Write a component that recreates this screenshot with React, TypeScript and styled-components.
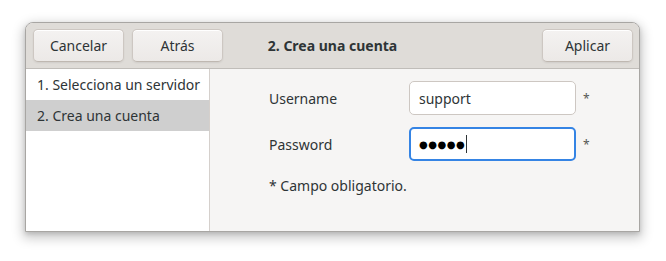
import React from "react";
import styled, { createGlobalStyle } from "styled-components";

const GlobalStyle = createGlobalStyle`
  html, body {
    margin: 0;
    padding: 0;
    background: #ffffff;
  }
  body {
    font-family: "Noto Sans", "DejaVu Sans", sans-serif;
    font-size: 14px;
    color: #2e3436;
  }
`;

const Stage = styled.div`
  padding: 22px 26px 29px 25px;
`;

const Window = styled.div`
  width: 615px;
  height: 210px;
  box-sizing: border-box;
  border: 1px solid #a8a6a3;
  border-radius: 8px 8px 0 0;
  background: #f6f5f4;
  box-shadow: 0 4px 12px 2px rgba(0, 0, 0, 0.22), 0 2px 4px rgba(0, 0, 0, 0.12);
  display: flex;
  flex-direction: column;
  overflow: hidden;
`;

const HeaderBar = styled.div`
  position: relative;
  height: 46px;
  flex: none;
  box-sizing: border-box;
  padding: 0 6px 0 7px;
  background: #dfdcd8;
  border-bottom: 1px solid #c0bdb9;
  display: flex;
  align-items: center;
  gap: 8px;
`;

const Spacer = styled.div`
  flex: 1;
`;

const Title = styled.div`
  position: absolute;
  left: 0;
  right: 0;
  top: 0;
  bottom: 0;
  display: flex;
  align-items: center;
  justify-content: center;
  font-weight: 700;
  pointer-events: none;
`;

const HeaderButton = styled.button`
  width: 91px;
  height: 33px;
  box-sizing: border-box;
  border: 1px solid #cdc7c2;
  border-bottom-color: #bfb8b1;
  border-radius: 5px;
  background: linear-gradient(to bottom, #f4f2f1, #ece9e7);
  box-shadow: inset 0 1px #ffffff, 0 1px 2px rgba(0, 0, 0, 0.07);
  font-family: inherit;
  font-size: 14px;
  color: #2e3436;
  padding: 0;
`;

const Body = styled.div`
  flex: 1;
  display: flex;
  min-height: 0;
`;

const Sidebar = styled.div`
  width: 183px;
  flex: none;
  background: #ffffff;
  border-right: 1px solid #d5d0cc;
`;

const SidebarRow = styled.div<{ $selected?: boolean }>`
  height: 31px;
  padding-left: 11px;
  display: flex;
  align-items: center;
  background: ${(p) => (p.$selected ? "#cfcfcf" : "transparent")};
`;

const Content = styled.div`
  flex: 1;
  padding: 12px 0 0 59px;
`;

const Form = styled.div`
  display: grid;
  grid-template-columns: 131px 167px auto;
  row-gap: 12px;
  column-gap: 9px;
  align-items: center;
`;

const Label = styled.div``;

const Entry = styled.div<{ $focused?: boolean }>`
  height: 34px;
  box-sizing: border-box;
  background: #ffffff;
  border: ${(p) => (p.$focused ? "2px solid #3584e4" : "1px solid #cdc7c2")};
  border-radius: 5px;
  padding-left: ${(p) => (p.$focused ? "8px" : "9px")};
  display: flex;
  align-items: center;
`;

const Dots = styled.span`
  font-size: 10px;
  letter-spacing: 0.5px;
  color: #000000;
`;

const Caret = styled.span`
  display: inline-block;
  width: 1px;
  height: 18px;
  background: #2e3436;
  margin-left: 1px;
`;

const Star = styled.div`
  color: #555753;
  font-size: 12px;
  margin-left: -2px;
`;

const Note = styled.div`
  margin-top: 15px;
`;

export default function App() {
  return (
    <>
      <GlobalStyle />
      <Stage>
        <Window>
          <HeaderBar>
            <HeaderButton>Cancelar</HeaderButton>
            <HeaderButton>Atrás</HeaderButton>
            <Spacer />
            <HeaderButton>Aplicar</HeaderButton>
            <Title>2. Crea una cuenta</Title>
          </HeaderBar>
          <Body>
            <Sidebar>
              <SidebarRow>1. Selecciona un servidor</SidebarRow>
              <SidebarRow $selected>2. Crea una cuenta</SidebarRow>
            </Sidebar>
            <Content>
              <Form>
                <Label>Username</Label>
                <Entry>support</Entry>
                <Star>*</Star>
                <Label>Password</Label>
                <Entry $focused>
                  <Dots>●●●●●</Dots>
                  <Caret />
                </Entry>
                <Star>*</Star>
              </Form>
              <Note>* Campo obligatorio.</Note>
            </Content>
          </Body>
        </Window>
      </Stage>
    </>
  );
}
